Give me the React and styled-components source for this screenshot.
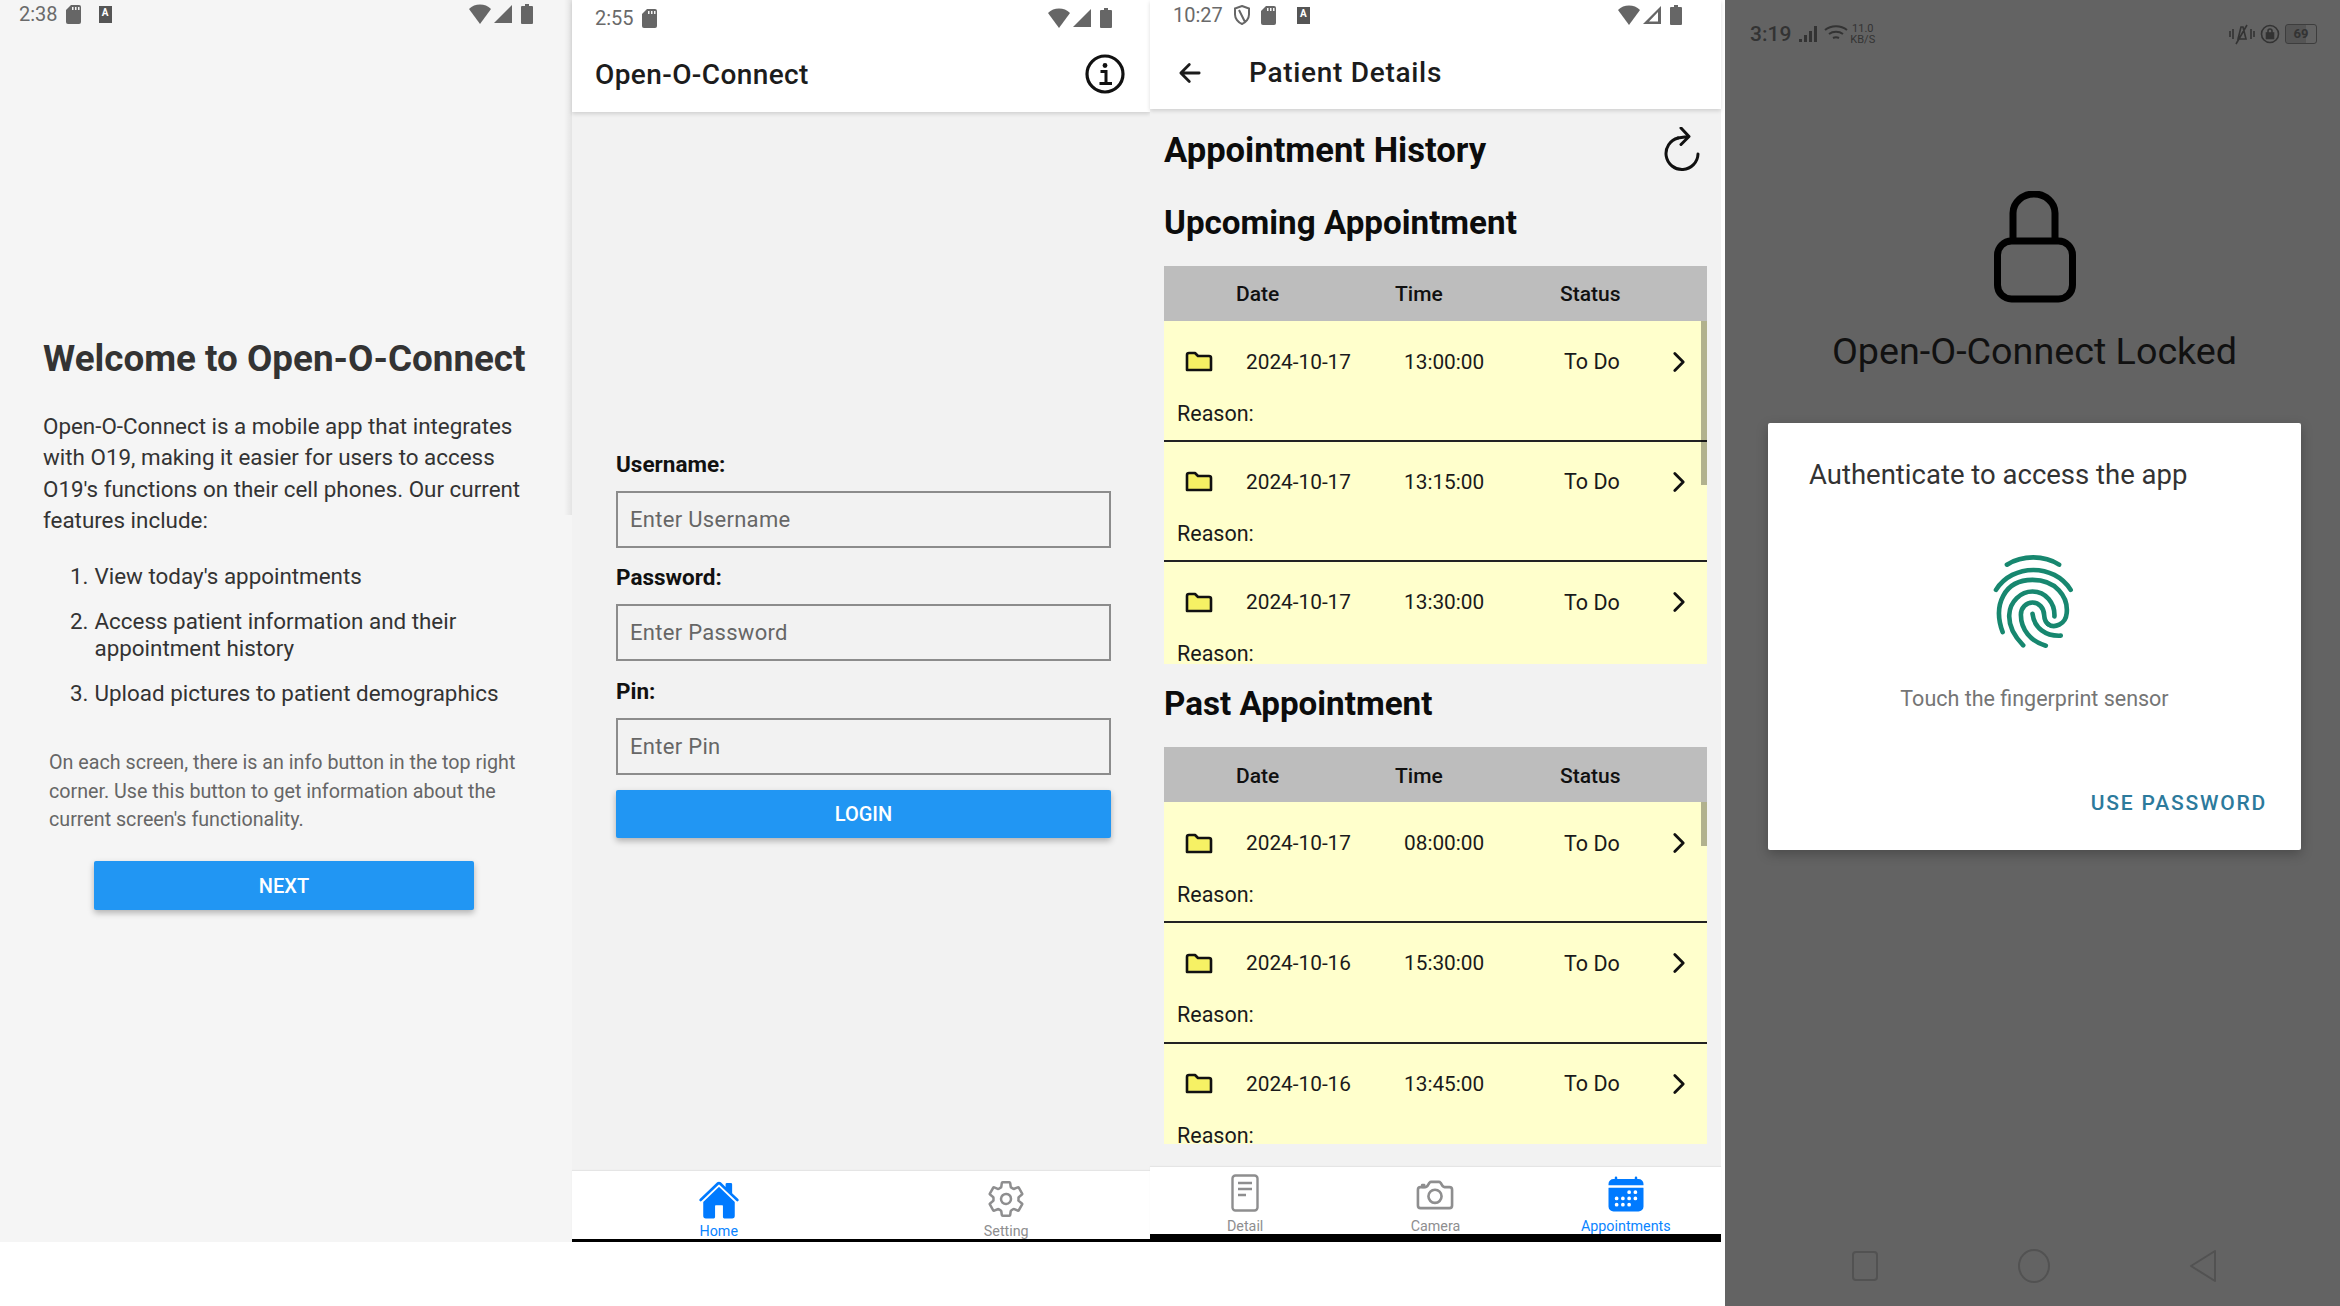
import React from "react";
import styled, { createGlobalStyle } from "styled-components";
import {
  IoHome,
  IoSettingsOutline,
  IoCameraOutline,
  IoCalendar,
  IoArrowBack,
  IoChevronForward,
} from "react-icons/io5";

const GlobalStyle = createGlobalStyle`
  html, body { margin: 0; padding: 0; background: #fff; }
  body { font-family: Roboto, "Liberation Sans", sans-serif; }
  * { box-sizing: border-box; }
`;

const Page = styled.div`
  display: flex;
  width: 2340px;
  height: 1306px;
  overflow: hidden;
`;

const Phone = styled.section`
  position: relative;
  display: flex;
  flex-direction: column;
  flex: none;
  width: ${(p) => p.$width}px;
  height: 1242px;
  background: ${(p) => p.$bg || "#f2f2f2"};
`;

const EdgeShadow = styled.div`
  position: absolute;
  top: 0;
  right: 0;
  width: 8px;
  height: 515px;
  background: linear-gradient(90deg, rgba(0, 0, 0, 0), rgba(0, 0, 0, 0.07));
`;

const StatusBar = styled.div`
  display: flex;
  align-items: center;
  flex: none;
  height: ${(p) => p.$height}px;
  padding: ${(p) => p.$padding};
  color: #6a6a6a;
  font-size: 20px;
  gap: ${(p) => p.$gap || 8}px;
`;

const StatusRight = styled.div`
  display: flex;
  align-items: center;
  gap: 3px;
  margin-left: auto;
`;

const Sd = () => (
  <svg width="15" height="19" viewBox="0 0 15 19" fill="#666">
    <path d="M5 0h8a2 2 0 0 1 2 2v15a2 2 0 0 1-2 2H2a2 2 0 0 1-2-2V5z" />
    <path d="M6 2h1.5v3H6zM9 2h1.5v3H9zM12 2h1.5v3H12z" fill="#f5f5f5" />
  </svg>
);

const KeyBox = styled.div`
  display: flex;
  justify-content: center;
  width: 13px;
  height: 17px;
  margin-left: 10px;
  background: #555;
  color: #fff;
  font-size: 10px;
  font-weight: 700;
  line-height: 14px;
`;

const KeyboardA = () => (
  <KeyBox>
    <span>A</span>
  </KeyBox>
);

const Wifi = () => (
  <svg width="22" height="20" viewBox="0 0 22 20" fill="#666">
    <path d="M0 5a16 16 0 0 1 22 0L11 20z" />
  </svg>
);

const Signal = ({ hollow }) => (
  <svg width="18" height="18" viewBox="0 0 18 18" fill="#666">
    {hollow ? (
      <path d="M18 0v18H0zM15 6 6 15.5h9z" fillRule="evenodd" />
    ) : (
      <path d="M18 0v18H0z" />
    )}
  </svg>
);

const Battery = () => (
  <svg width="12" height="20" viewBox="0 0 12 20" fill="#666" style={{ marginLeft: 6 }}>
    <path d="M4 0h4v2h3a1 1 0 0 1 1 1v16a1 1 0 0 1-1 1H1a1 1 0 0 1-1-1V3a1 1 0 0 1 1-1h3z" />
  </svg>
);

const Shield = () => (
  <svg width="16" height="20" viewBox="0 0 16 20" fill="none" stroke="#666" strokeWidth="2">
    <path d="M8 1 15 3.500v6c0 4-3 8-7 9.500-4-1.500-7-5.500-7-9.500v-6zM5 5l6 12" />
  </svg>
);

/* ---------- welcome ---------- */

const WelcomeBody = styled.div`
  display: flex;
  flex-direction: column;
  padding: 307px 30px 0 43px;
  color: #333;
`;

const WelcomeTitle = styled.h1`
  margin: 0 0 28px;
  font-size: 36.8px;
  line-height: 48px;
  font-weight: 700;
  white-space: nowrap;
`;

const Paragraph = styled.p`
  margin: 0 0 27px;
  font-size: 22.4px;
  line-height: 31.3px;
`;

const Feature = styled.div`
  display: flex;
  gap: 6px;
  margin: 0 0 18px 27px;
  font-size: 22.4px;
  line-height: 27px;
`;

const Note = styled.p`
  margin: 24px 0 27px 6px;
  color: #666;
  font-size: 19.7px;
  line-height: 28.4px;
`;

const PrimaryButton = styled.div`
  display: flex;
  align-items: center;
  justify-content: center;
  width: ${(p) => p.$width}px;
  height: ${(p) => p.$height}px;
  margin-left: ${(p) => p.$left || 0}px;
  background: #2196f3;
  border-radius: 2px;
  color: #fff;
  font-size: 20px;
  font-weight: 500;
  box-shadow: 0 3px 6px rgba(0, 0, 0, 0.28);
`;

/* ---------- login ---------- */

const AppHeader = styled.header`
  position: relative;
  flex: none;
  background: #fff;
  box-shadow: 0 2px 4px rgba(0, 0, 0, 0.14);
`;

const HeaderRow = styled.div`
  display: flex;
  align-items: center;
  height: ${(p) => p.$height}px;
  padding: ${(p) => p.$padding};
  color: #1c1c1c;
  font-size: 28px;
  font-weight: 500;
  letter-spacing: 0.4px;
`;

const HeaderAction = styled.div`
  display: flex;
  margin-left: auto;
  color: #111;
`;

const LoginForm = styled.div`
  display: flex;
  flex-direction: column;
  flex: 1;
  padding: 337.5px 0 0 44px;
`;

const FieldLabel = styled.label`
  height: 28px;
  margin-bottom: 13px;
  color: #111;
  font-size: 22.5px;
  font-weight: 700;
  line-height: 28px;
`;

const FieldBox = styled.div`
  display: flex;
  align-items: center;
  width: 495px;
  height: 57px;
  margin-bottom: 15.5px;
  padding-left: 12px;
  border: 2px solid #8c8c8c;
  color: #666;
  font-size: 22px;
  letter-spacing: 0.3px;
`;

/* ---------- tabs ---------- */

const TabBar = styled.nav`
  display: flex;
  flex: none;
  height: ${(p) => p.$height}px;
  padding-left: ${(p) => p.$shift || 0}px;
  background: #fff;
  border-bottom: ${(p) => p.$line}px solid #000;
  box-shadow: 0 -1px 1px rgba(0, 0, 0, 0.05);
`;

const TabItem = styled.div`
  display: flex;
  flex: 1;
  flex-direction: column;
  align-items: center;
  padding-top: ${(p) => p.$top}px;
  color: ${(p) => (p.$active ? "#0a84ff" : "#8e8e8f")};
  font-size: 14.3px;
  line-height: 16px;
  white-space: nowrap;
`;

const TabIcon = styled.div`
  display: flex;
  justify-content: center;
  height: ${(p) => p.$height}px;
  color: ${(p) => (p.$active ? "#007aff" : "#8e8e8f")};
`;

const DetailIcon = () => (
  <svg width="28" height="38" viewBox="0 0 28 38" fill="none" stroke="#8e8e8f" strokeWidth="2.4">
    <rect x="1.5" y="1.5" width="25" height="35" rx="3" />
    <path d="M7 9h14M7 15h14M7 21h8" />
  </svg>
);

const InfoIcon = () => (
  <svg width="40" height="40" viewBox="0 0 40 40" fill="none" stroke="#111">
    <circle cx="20" cy="20" r="18" strokeWidth="3.2" />
    <path d="M15.500 17.500H21V29M14.500 29.500h12.500" strokeWidth="3" />
    <circle cx="20" cy="11.500" r="2.400" fill="#111" stroke="none" />
  </svg>
);

/* ---------- patient ---------- */

const PatientBody = styled.div`
  display: flex;
  flex: 1;
  flex-direction: column;
  min-height: 0;
  padding: 18.5px 14px 0 14px;
`;

const PatientTitle = styled.span`
  margin-left: 44px;
  letter-spacing: 0.7px;
`;

const HistoryRow = styled.div`
  display: flex;
  align-items: center;
  height: 44px;
`;

const SectionTitle = styled.h2`
  margin: ${(p) => p.$margin};
  color: #0c0c0c;
  font-size: ${(p) => p.$size || 33.2}px;
  font-weight: 700;
  line-height: 44px;
  white-space: nowrap;
`;

const RefreshAction = styled.div`
  display: flex;
  margin-left: auto;
  margin-right: 7px;
`;

const TableHead = styled.div`
  display: grid;
  grid-template-columns: 72px 159px 165px 1fr;
  align-items: center;
  height: 55px;
  padding-top: 2px;
  background: #bdbdbd;
  color: #111;
  font-size: 21px;
  font-weight: 500;
`;

const ScrollArea = styled.div`
  position: relative;
  height: ${(p) => p.$height}px;
  padding-top: 1px;
  background: #ffffcc;
  overflow: hidden;
`;

const ScrollThumb = styled.div`
  position: absolute;
  top: 0;
  right: 0;
  width: 6px;
  height: ${(p) => p.$height}px;
  background: rgba(0, 0, 0, 0.3);
`;

const Row = styled.div`
  display: flex;
  flex-direction: column;
  height: 120.3px;
  padding-left: 13px;
  border-bottom: 2px solid #222;
  color: #1a1a1a;
  font-size: 21.5px;
`;

const RowMain = styled.div`
  display: grid;
  grid-template-columns: 69px 158px 160px 100px 30px;
  align-items: center;
  height: 80px;
`;

const RowDigits = styled.span`
  font-size: 20.8px;
`;

const RowReason = styled.div`
  line-height: 26px;
  margin-top: -1px;
`;

const FolderWrap = styled.div`
  display: flex;
  padding-left: 8px;
`;

const Folder = () => (
  <FolderWrap>
    <svg width="28" height="21" viewBox="0 0 28 21">
      <path
        d="M2 19V4a2 2 0 0 1 2-2h6l3 3h11a2 2 0 0 1 2 2v12z"
        fill="#f6f164"
        stroke="#111"
        strokeWidth="2.6"
        strokeLinejoin="round"
      />
    </svg>
  </FolderWrap>
);

const Refresh = () => (
  <svg width="36" height="46" viewBox="0 0 36 46" fill="none" stroke="#111" strokeWidth="3" strokeLinecap="round" strokeLinejoin="round">
    <path d="M14 11a16 16 0 1 0 20 16" />
    <path d="M14 11 24 9.500M17 1l8 8.500-8 8" />
  </svg>
);

/* ---------- lock screen ---------- */

const LockPhone = styled.section`
  display: flex;
  flex: none;
  flex-direction: column;
  width: 615px;
  height: 1306px;
  margin-left: 4px;
  background: #636363;
`;

const LockStatus = styled.div`
  display: flex;
  align-items: center;
  height: 68px;
  padding: 0 23px 0 25px;
  color: #333;
  font-size: 21px;
  font-weight: 500;
`;

const NetSpeed = styled.div`
  margin-left: 2px;
  font-size: 11px;
  line-height: 11px;
  font-weight: 400;
  text-align: center;
`;

const StatusGlyphs = styled.div`
  display: flex;
  align-items: center;
  gap: 5px;
  margin-left: auto;
`;

const BatteryBox = styled.div`
  width: 32px;
  height: 20px;
  border: 1px solid #3d3d3d;
  border-radius: 3px;
  background: linear-gradient(90deg, #555 0 68%, transparent 68%);
  font-size: 13px;
  font-weight: 700;
  line-height: 18px;
  text-align: center;
`;

const LockHero = styled.div`
  display: flex;
  flex-direction: column;
  align-items: center;
  padding: 123px 0 0 4px;
`;

const LockTitle = styled.h2`
  margin: 23.5px 0 48px;
  color: #111;
  font-size: 37.7px;
  font-weight: 400;
  line-height: 48px;
  white-space: nowrap;
`;

const Dialog = styled.div`
  display: flex;
  flex-direction: column;
  width: 533px;
  height: 427px;
  margin-left: 43px;
  padding: 31px 34px 0 41px;
  background: #fff;
  box-shadow: 0 4px 12px rgba(0, 0, 0, 0.25);
  border-radius: 2px;
`;

const DialogTitle = styled.div`
  color: #333;
  font-size: 27.5px;
  line-height: 42px;
`;

const FingerprintWrap = styled.div`
  display: flex;
  justify-content: center;
  margin: 57px 0 0 -9px;
`;

const Hint = styled.div`
  margin: 35px 0 0 -7px;
  color: #757575;
  font-size: 21.5px;
  line-height: 28px;
  text-align: center;
`;

const TextButton = styled.div`
  margin-top: 78px;
  color: #2c7a9c;
  font-size: 21px;
  font-weight: 500;
  letter-spacing: 1.8px;
  text-align: right;
`;

const NavBar = styled.div`
  display: flex;
  justify-content: center;
  align-items: center;
  gap: 139.5px;
  height: 81px;
  margin-top: auto;
  padding-left: 4px;
`;

const Fingerprint = () => (
  <svg width="83" height="97" viewBox="278 95 250 290" fill="none" stroke="#17876f" strokeWidth="14" strokeLinecap="round">
    <path d="M323 129C370 100 435 100 480 129" />
    <path d="M290 205C340 125 465 125 515 205" />
    <path d="M310 332C280 250 315 175 400 175C470 175 508 225 503 275C500 310 465 322 447 308" />
    <path d="M372 372C345 345 328 315 330 280C332 240 365 210 400 210C440 210 468 245 466 285" />
    <path d="M440 373C395 360 365 325 365 280C365 258 382 243 400 243C420 243 434 260 435 280C436 295 440 303 447 308" />
    <path d="M485 343C440 345 405 320 400 277" />
  </svg>
);

const Lock = () => (
  <svg width="82" height="112" viewBox="0 0 82 112" fill="none" stroke="#000" strokeWidth="7">
    <path d="M19 50V22a21 19 0 0 1 42 0v28" />
    <rect x="3.500" y="50" width="75" height="58" rx="14" />
  </svg>
);

const upcoming = ["13:00:00", "13:15:00", "13:30:00"];
const past = [
  ["2024-10-17", "08:00:00"],
  ["2024-10-16", "15:30:00"],
  ["2024-10-16", "13:45:00"],
];

function Appointments({ rows, height, thumb }) {
  return (
    <>
      <TableHead>
        <span />
        <span>Date</span>
        <span>Time</span>
        <span>Status</span>
      </TableHead>
      <ScrollArea $height={height}>
        {rows.map(([date, time]) => (
          <Row key={date + time}>
            <RowMain>
              <Folder />
              <RowDigits>{date}</RowDigits>
              <RowDigits>{time}</RowDigits>
              <span>To Do</span>
              <IoChevronForward size={30} color="#111" />
            </RowMain>
            <RowReason>Reason:</RowReason>
          </Row>
        ))}
        <ScrollThumb $height={thumb} />
      </ScrollArea>
    </>
  );
}

export default function App() {
  return (
    <Page>
      <GlobalStyle />

      <Phone $width={572} $bg="#f5f5f5">
        <EdgeShadow />
        <StatusBar $height={28} $padding="0 39px 0 19px">
          2:38 <Sd /> <KeyboardA />
          <StatusRight>
            <Wifi />
            <Signal />
            <Battery />
          </StatusRight>
        </StatusBar>
        <WelcomeBody>
          <WelcomeTitle>Welcome to Open-O-Connect</WelcomeTitle>
          <Paragraph>
            Open-O-Connect is a mobile app that integrates with O19, making it easier for users to
            access O19's functions on their cell phones. Our current features include:
          </Paragraph>
          <Feature>
            <span>1.</span>
            <span>View today's appointments</span>
          </Feature>
          <Feature>
            <span>2.</span>
            <span>
              Access patient information and their
              <br />
              appointment history
            </span>
          </Feature>
          <Feature>
            <span>3.</span>
            <span>Upload pictures to patient demographics</span>
          </Feature>
          <Note>
            On each screen, there is an info button in the top right corner. Use this button to get
            information about the current screen's functionality.
          </Note>
          <PrimaryButton $width={380} $height={49} $left={51}>
            NEXT
          </PrimaryButton>
        </WelcomeBody>
      </Phone>

      <Phone $width={578}>
        <AppHeader>
          <StatusBar $height={36} $padding="0 38px 0 23px">
            2:55 <Sd />
            <StatusRight>
              <Wifi />
              <Signal />
              <Battery />
            </StatusRight>
          </StatusBar>
          <HeaderRow $height={76} $padding="0 25px 0 23px">
            Open-O-Connect
            <HeaderAction>
              <InfoIcon />
            </HeaderAction>
          </HeaderRow>
        </AppHeader>
        <LoginForm>
          <FieldLabel>Username:</FieldLabel>
          <FieldBox>Enter Username</FieldBox>
          <FieldLabel>Password:</FieldLabel>
          <FieldBox>Enter Password</FieldBox>
          <FieldLabel>Pin:</FieldLabel>
          <FieldBox>Enter Pin</FieldBox>
          <PrimaryButton $width={495} $height={48}>
            LOGIN
          </PrimaryButton>
        </LoginForm>
        <TabBar $height={71} $line={3} $shift={3}>
          <TabItem $active $top={8}>
            <TabIcon $active $height={44}>
              <IoHome size={42} />
            </TabIcon>
            Home
          </TabItem>
          <TabItem $top={8}>
            <TabIcon $height={44}>
              <IoSettingsOutline size={40} />
            </TabIcon>
            Setting
          </TabItem>
        </TabBar>
      </Phone>

      <Phone $width={571}>
        <AppHeader>
          <StatusBar $height={30} $padding="0 39px 0 23px" $gap={11}>
            10:27
            <Shield />
            <Sd /> <KeyboardA />
            <StatusRight>
              <Wifi />
              <Signal hollow />
              <Battery />
            </StatusRight>
          </StatusBar>
          <HeaderRow $height={79} $padding="6px 0 0 25px">
            <IoArrowBack size={30} />
            <PatientTitle>Patient Details</PatientTitle>
          </HeaderRow>
        </AppHeader>
        <PatientBody>
          <HistoryRow>
            <SectionTitle $margin="0" $size={34.6}>
              Appointment History
            </SectionTitle>
            <RefreshAction>
              <Refresh />
            </RefreshAction>
          </HistoryRow>
          <SectionTitle $margin="29.5px 0 20.5px">Upcoming Appointment</SectionTitle>
          <Appointments rows={upcoming.map((t) => ["2024-10-17", t])} height={343} thumb={164} />
          <SectionTitle $margin="18.5px 0 21px">Past Appointment</SectionTitle>
          <Appointments rows={past} height={342} thumb={44} />
        </PatientBody>
        <TabBar $height={75} $line={8}>
          <TabItem $top={7}>
            <TabIcon $height={48}>
              <DetailIcon />
            </TabIcon>
            Detail
          </TabItem>
          <TabItem $top={7}>
            <TabIcon $height={48}>
              <IoCameraOutline size={42} />
            </TabIcon>
            Camera
          </TabItem>
          <TabItem $active $top={7}>
            <TabIcon $active $height={48}>
              <IoCalendar size={40} />
            </TabIcon>
            Appointments
          </TabItem>
        </TabBar>
      </Phone>

      <LockPhone>
        <LockStatus>
          3:19
          <svg width="20" height="16" viewBox="0 0 20 16" fill="#333" style={{ margin: "0 5px 0 8px" }}>
            <path d="M0 13h3v3H0zM5 9h3v7H5zM10 5h3v11h-3zM15 0h3v16h-3z" />
          </svg>
          <svg width="24" height="20" viewBox="0 0 24 20" fill="none" stroke="#333" strokeWidth="2">
            <path d="M1 6c6-5 16-5 22 0M5 10c4-3 10-3 14 0M9 14c2-1 4-1 6 0" />
          </svg>
          <NetSpeed>
            11.0
            <br />
            KB/S
          </NetSpeed>
          <StatusGlyphs>
            <svg width="26" height="22" viewBox="0 0 26 22" fill="none" stroke="#333" strokeWidth="1.6">
              <path d="M1 8v6M4 6v10M22 6v10M25 8v6M9 16l3-12h2l3 12zM18 2 7 21" />
            </svg>
            <svg width="20" height="20" viewBox="0 0 20 20" fill="none" stroke="#333" strokeWidth="1.6">
              <circle cx="10" cy="10" r="8.500" />
              <rect x="6.500" y="9" width="7" height="5.500" fill="#333" />
              <path d="M8 9V7a2 2 0 0 1 4 0v2" />
            </svg>
            <BatteryBox>69</BatteryBox>
          </StatusGlyphs>
        </LockStatus>
        <LockHero>
          <Lock />
          <LockTitle>Open-O-Connect Locked</LockTitle>
        </LockHero>
        <Dialog>
          <DialogTitle>Authenticate to access the app</DialogTitle>
          <FingerprintWrap>
            <Fingerprint />
          </FingerprintWrap>
          <Hint>Touch the fingerprint sensor</Hint>
          <TextButton>USE PASSWORD</TextButton>
        </Dialog>
        <NavBar>
          <svg width="26" height="30" viewBox="0 0 26 30" fill="none" stroke="#525252" strokeWidth="2">
            <rect x="1" y="1" width="24" height="28" rx="3" />
          </svg>
          <svg width="32" height="34" viewBox="0 0 32 34" fill="none" stroke="#525252" strokeWidth="2">
            <ellipse cx="16" cy="17" rx="15" ry="16" />
          </svg>
          <svg width="28" height="34" viewBox="0 0 28 34" fill="none" stroke="#525252" strokeWidth="2">
            <path d="M26 2v30L2 17z" strokeLinejoin="round" />
          </svg>
        </NavBar>
      </LockPhone>
    </Page>
  );
}
